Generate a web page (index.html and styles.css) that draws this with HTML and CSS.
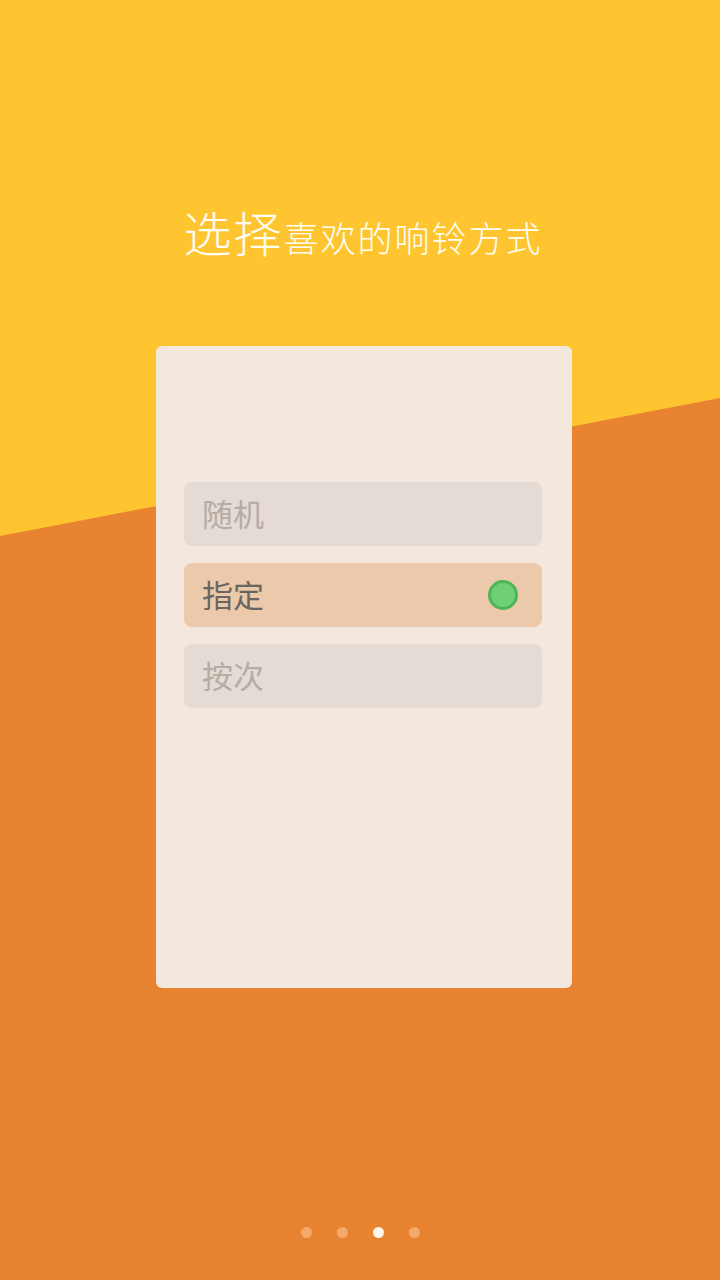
FILE: index.html
```html
<!DOCTYPE html>
<html lang="zh">
<head>
<meta charset="utf-8">
<link rel="stylesheet" href="styles.css">
</head>
<body>
<div class="page">
  <h1 class="title"><span class="big">选择</span><span class="small">喜欢的响铃方式</span></h1>
  <div class="card">
    <div class="option">随机</div>
    <div class="option selected">指定<span class="radio"></span></div>
    <div class="option">按次</div>
  </div>
  <div class="dots">
    <span class="dot"></span>
    <span class="dot"></span>
    <span class="dot active"></span>
    <span class="dot"></span>
  </div>
</div>
</body>
</html>
```
FILE: styles.css
```css
html, body {
  margin: 0;
  padding: 0;
}
body {
  font-family: "Noto Sans CJK SC", "Noto Sans", sans-serif;
}
.page {
  position: relative;
  width: 720px;
  height: 1280px;
  background: #E88431;
  overflow: hidden;
  display: flex;
  flex-direction: column;
  align-items: center;
}
.page::before {
  content: "";
  position: absolute;
  inset: 0;
  background: #FEC531;
  clip-path: polygon(0 0, 100% 0, 100% 398px, 0 536px);
}
.title {
  position: relative;
  margin: 206px 0 0 6px;
  color: #FFFDF5;
  font-weight: 300;
  line-height: 50px;
  height: 50px;
  display: flex;
  align-items: baseline;
}
.big {
  font-size: 48px;
  letter-spacing: 2px;
}
.small {
  font-size: 35px;
  letter-spacing: 2px;
}
.card {
  position: relative;
  margin: 90px 0 0 8px;
  width: 416px;
  height: 642px;
  box-sizing: border-box;
  padding: 136px 30px 0 28px;
  background: #F4E7DD;
  border-radius: 6px;
  display: flex;
  flex-direction: column;
  gap: 17px;
}
.option {
  height: 64px;
  border-radius: 8px;
  background: #E4DBD4;
  color: #B6ACA4;
  font-size: 31px;
  display: flex;
  align-items: center;
  justify-content: space-between;
  padding: 0 24px 3px 18px;
  box-sizing: border-box;
}
.option.selected {
  background: #EBC9AA;
  color: #6B6560;
}
.radio {
  width: 24px;
  height: 24px;
  margin-top: 3px;
  border-radius: 50%;
  background: #6ECF74;
  border: 3.5px solid #4DB556;
}
.dots {
  position: relative;
  margin-top: auto;
  margin-bottom: 42px;
  display: flex;
  gap: 25px;
}
.dot {
  width: 11px;
  height: 11px;
  border-radius: 50%;
  background: #F4A86A;
}
.dot.active {
  background: #FFF6EA;
}
```
